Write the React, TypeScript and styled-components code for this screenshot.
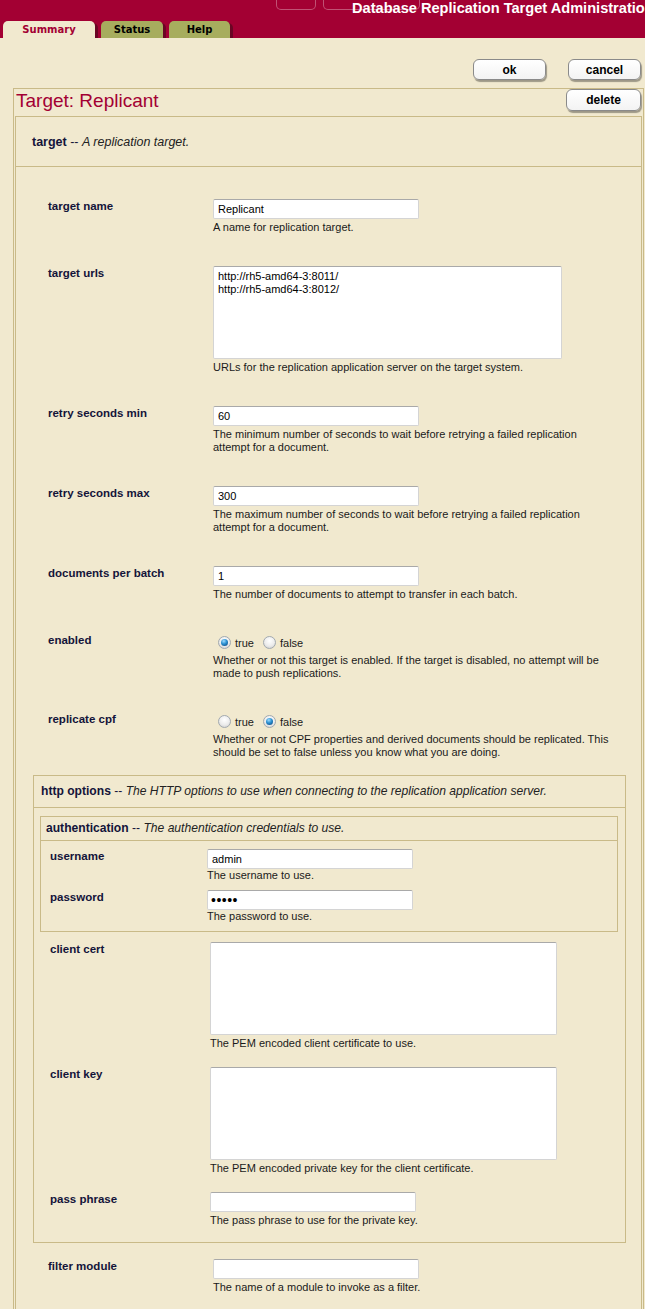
import React from 'react'
import styled, {createGlobalStyle, css} from 'styled-components'

const crimson = '#a30033'
const cream = '#f1e9cf'
const tan = '#c9ba88'
const navy = '#14143a'

const GlobalStyle = createGlobalStyle`
    html, body {
        margin: 0;
        padding: 0;
        background: ${cream};
        overflow-x: hidden;
    }
    body {
        font-family: "Liberation Sans", Arial, sans-serif;
    }
`

const Header = styled.header`
    background: ${crimson};
    height: 38px;
    overflow: hidden;
`

const TopStrip = styled.div`
    display: flex;
    align-items: flex-start;
    height: 21px;
    white-space: nowrap;
`

const NavStub = styled.span<{$offset: number; $width: number}>`
    flex: none;
    margin-left: ${(p) => p.$offset}px;
    width: ${(p) => p.$width}px;
    height: 10px;
    box-sizing: border-box;
    border: 1px solid rgba(255, 255, 255, 0.32);
    border-top: none;
    border-radius: 0 0 5px 5px;
`

const AppTitle = styled.h1`
    flex: none;
    position: relative;
    margin: 0 0 0 -68px;
    font: bold 14.6px/16px "Liberation Sans", Arial, sans-serif;
    color: #fff;
`

const TabBar = styled.nav`
    display: flex;
    gap: 6px;
    padding-left: 3px;
    height: 17px;
`

const Tab = styled.div<{$active?: boolean; $width: number}>`
    width: ${(p) => p.$width}px;
    height: 17px;
    border-radius: 5px 5px 0 0;
    background: ${(p) => (p.$active ? cream : '#a7ad5e')};
    color: ${(p) => (p.$active ? crimson : '#000')};
    box-shadow: 3px 2px 0 #6a0624;
    font: bold 10px/18px "DejaVu Sans", Verdana, sans-serif;
    text-align: center;
`

const Page = styled.main`
    padding: 21px 0 0;
`

const ActionBar = styled.div`
    display: flex;
    justify-content: flex-end;
    gap: 22px;
    padding-right: 4px;
`

const Button = styled.button<{$width: number; $tall?: boolean}>`
    width: ${(p) => p.$width}px;
    height: ${(p) => (p.$tall ? 22 : 21)}px;
    padding: 0;
    background: linear-gradient(#ffffff, #f3f3f3);
    border: 1px solid #8a8a8a;
    border-radius: 6px;
    box-shadow: 1px 2px 1px rgba(0, 0, 0, 0.35);
    font: bold 12px "Liberation Sans", Arial, sans-serif;
    color: #000;
`

const Panel = styled.section`
    margin: 8px 1px 0 13px;
    padding: 0 1px;
    border: 1px solid ${tan};
    border-bottom: none;
`

const PanelHead = styled.div`
    display: flex;
    justify-content: space-between;
    align-items: flex-start;
    height: 27px;
    padding: 0 1px;
`

const PanelTitle = styled.h2`
    margin: 0;
    font: 19px/23px "Liberation Sans", Arial, sans-serif;
    color: ${crimson};
`

const Section = styled.div`
    border: 1px solid ${tan};
    border-bottom: none;
`

const SectionHead = styled.div`
    padding: 18px 16px 16px;
    border-bottom: 1px solid ${tan};
    font: 12.5px/15px "Liberation Sans", Arial, sans-serif;
    color: ${navy};

    i {
        color: #222;
    }
`

const SectionBody = styled.div`
    padding: 16px 15px 60px 17px;
`

const Group = styled.div<{$nested?: boolean}>`
    border: 1px solid ${tan};
    ${(p) =>
        p.$nested &&
        css`
            margin-bottom: 2px;
        `}
`

const GroupHead = styled.div<{$nested?: boolean}>`
    padding: ${(p) => (p.$nested ? '4px 5px' : '8px 7px')};
    border-bottom: 1px solid ${tan};
    font: 12.1px/15px "Liberation Sans", Arial, sans-serif;
    color: ${navy};

    i {
        color: #222;
    }
`

const GroupBody = styled.div<{$nested?: boolean}>`
    padding: ${(p) => (p.$nested ? '4px 0' : '8px 7px 6px 6px')};
`

type Variant = 'main' | 'auth' | 'nested'

const rowLayout: Record<Variant, {pad: string; col: number; gap: number}> = {
    main: {pad: '16px 0 16px 15px', col: 165, gap: 2},
    auth: {pad: '4px 0 4px 9px', col: 157, gap: 0},
    nested: {pad: '8px 0 9px 10px', col: 160, gap: 2},
}

const FieldRow = styled.div<{$variant: Variant}>`
    display: grid;
    grid-template-columns: ${(p) => rowLayout[p.$variant].col}px 1fr;
    padding: ${(p) => rowLayout[p.$variant].pad};
`

const FieldLabel = styled.div`
    font: bold 11.5px/15px "Liberation Sans", Arial, sans-serif;
    color: ${navy};
`

const TextInput = styled.input`
    display: block;
    width: 206px;
    height: 20px;
    box-sizing: border-box;
    margin: 0;
    padding: 0 4px;
    background: #fff;
    border: 1px solid #d4d4d4;
    border-top-color: #a9a9a9;
    border-radius: 2px;
    font: 11px "Liberation Sans", Arial, sans-serif;
    color: #000;
    outline: none;

    &[type='password'] {
        padding-left: 3px;
        font-size: 14px;
        letter-spacing: 0.5px;
    }
`

const TextArea = styled.textarea<{$width: number}>`
    display: block;
    width: ${(p) => p.$width}px;
    height: 93px;
    box-sizing: border-box;
    margin: 0;
    padding: 3px 4px;
    background: #fff;
    border: 1px solid #d4d4d4;
    border-top-color: #a9a9a9;
    border-radius: 2px;
    font: 11px/13px "Liberation Sans", Arial, sans-serif;
    color: #000;
    resize: none;
    overflow: hidden;
    outline: none;
`

const Help = styled.div<{$gap: number}>`
    margin-top: ${(p) => p.$gap}px;
    font: 11px/13px "Liberation Sans", Arial, sans-serif;
    color: #1a1a1a;
    white-space: pre-line;
`

const RadioGroup = styled.div`
    display: flex;
    align-items: center;
    height: 19px;
    font: 11px "Liberation Sans", Arial, sans-serif;
    color: #1a1a1a;
`

const Option = styled.label`
    display: inline-flex;
    align-items: center;

    & + & {
        margin-left: 4px;
    }
`

const Radio = styled.span<{$checked?: boolean}>`
    display: inline-flex;
    align-items: center;
    justify-content: center;
    width: 13px;
    height: 13px;
    margin: 0 4px 0 5px;
    box-sizing: border-box;
    border: 1px solid #a2a9b0;
    border-radius: 50%;
    background: radial-gradient(circle at 50% 35%, #ffffff 0%, #ececec 55%, #c9c9c9 100%);

    ${(p) =>
        p.$checked &&
        css`
            &::after {
                content: '';
                width: 7px;
                height: 7px;
                border-radius: 50%;
                background: radial-gradient(circle at 40% 30%, #9fdcff 0%, #2a8fd0 45%, #0b3c74 100%);
            }
        `}
`

const Field: React.FC<{label: string; help: string; variant?: Variant; children: React.ReactNode}> = ({
    label,
    help,
    variant = 'main',
    children,
}) => (
    <FieldRow $variant={variant}>
        <FieldLabel>{label}</FieldLabel>
        <div>
            {children}
            <Help $gap={rowLayout[variant].gap}>{help}</Help>
        </div>
    </FieldRow>
)

const Choice: React.FC<{value: boolean}> = ({value}) => (
    <RadioGroup>
        <Option>
            <Radio $checked={value} />
            true
        </Option>
        <Option>
            <Radio $checked={!value} />
            false
        </Option>
    </RadioGroup>
)

export default function App() {
    return (
        <>
            <GlobalStyle />
            <Header>
                <TopStrip>
                    <NavStub $offset={276} $width={40} />
                    <NavStub $offset={7} $width={97} />
                    <AppTitle>Database Replication Target Administration</AppTitle>
                </TopStrip>
                <TabBar>
                    <Tab $active $width={92}>
                        Summary
                    </Tab>
                    <Tab $width={62}>Status</Tab>
                    <Tab $width={61}>Help</Tab>
                </TabBar>
            </Header>
            <Page>
                <ActionBar>
                    <Button $width={73}>ok</Button>
                    <Button $width={73}>cancel</Button>
                </ActionBar>
                <Panel>
                    <PanelHead>
                        <PanelTitle>Target: Replicant</PanelTitle>
                        <Button $width={75} $tall>
                            delete
                        </Button>
                    </PanelHead>
                    <Section>
                        <SectionHead>
                            <b>target</b> -- <i>A replication target.</i>
                        </SectionHead>
                        <SectionBody>
                            <Field label="target name" help="A name for replication target.">
                                <TextInput readOnly defaultValue="Replicant" />
                            </Field>
                            <Field
                                label="target urls"
                                help="URLs for the replication application server on the target system."
                            >
                                <TextArea
                                    $width={349}
                                    readOnly
                                    defaultValue={'http://rh5-amd64-3:8011/\nhttp://rh5-amd64-3:8012/'}
                                />
                            </Field>
                            <Field
                                label="retry seconds min"
                                help={
                                    'The minimum number of seconds to wait before retrying a failed replication\nattempt for a document.'
                                }
                            >
                                <TextInput readOnly defaultValue="60" />
                            </Field>
                            <Field
                                label="retry seconds max"
                                help={
                                    'The maximum number of seconds to wait before retrying a failed replication\nattempt for a document.'
                                }
                            >
                                <TextInput readOnly defaultValue="300" />
                            </Field>
                            <Field
                                label="documents per batch"
                                help="The number of documents to attempt to transfer in each batch."
                            >
                                <TextInput readOnly defaultValue="1" />
                            </Field>
                            <Field
                                label="enabled"
                                help={
                                    'Whether or not this target is enabled. If the target is disabled, no attempt will be\nmade to push replications.'
                                }
                            >
                                <Choice value={true} />
                            </Field>
                            <Field
                                label="replicate cpf"
                                help={
                                    'Whether or not CPF properties and derived documents should be replicated. This\nshould be set to false unless you know what you are doing.'
                                }
                            >
                                <Choice value={false} />
                            </Field>

                            <Group>
                                <GroupHead>
                                    <b>http options</b> --{' '}
                                    <i>The HTTP options to use when connecting to the replication application server.</i>
                                </GroupHead>
                                <GroupBody>
                                    <Group $nested>
                                        <GroupHead $nested>
                                            <b>authentication</b> -- <i>The authentication credentials to use.</i>
                                        </GroupHead>
                                        <GroupBody $nested>
                                            <Field variant="auth" label="username" help="The username to use.">
                                                <TextInput readOnly defaultValue="admin" />
                                            </Field>
                                            <Field variant="auth" label="password" help="The password to use.">
                                                <TextInput type="password" readOnly defaultValue="admin" />
                                            </Field>
                                        </GroupBody>
                                    </Group>
                                    <Field
                                        variant="nested"
                                        label="client cert"
                                        help="The PEM encoded client certificate to use."
                                    >
                                        <TextArea $width={347} readOnly defaultValue="" />
                                    </Field>
                                    <Field
                                        variant="nested"
                                        label="client key"
                                        help="The PEM encoded private key for the client certificate."
                                    >
                                        <TextArea $width={347} readOnly defaultValue="" />
                                    </Field>
                                    <Field
                                        variant="nested"
                                        label="pass phrase"
                                        help="The pass phrase to use for the private key."
                                    >
                                        <TextInput type="password" readOnly defaultValue="" />
                                    </Field>
                                </GroupBody>
                            </Group>

                            <Field label="filter module" help="The name of a module to invoke as a filter.">
                                <TextInput readOnly defaultValue="" />
                            </Field>
                        </SectionBody>
                    </Section>
                </Panel>
            </Page>
        </>
    )
}
